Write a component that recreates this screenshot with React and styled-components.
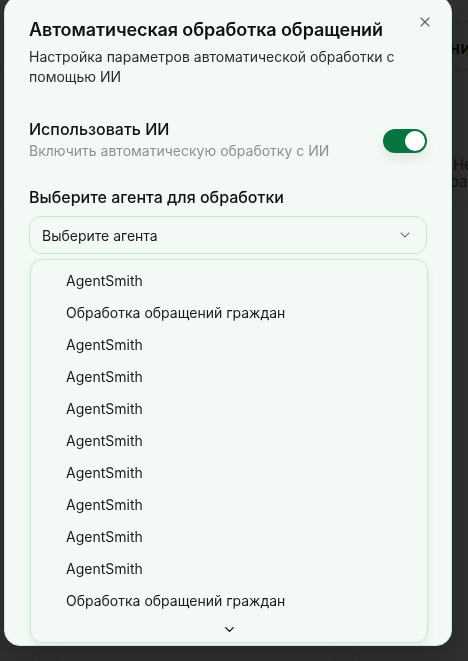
import React from "react";
import styled, { createGlobalStyle } from "styled-components";
import { X, ChevronDown } from "lucide-react";

const Global = createGlobalStyle`
  html, body { margin: 0; padding: 0; }
  body {
    background: #ffffff;
    font-family: Inter, "Noto Sans", "Liberation Sans", sans-serif;
    -webkit-font-smoothing: antialiased;
  }
  * { box-sizing: border-box; }
`;

const Page = styled.div`
  width: 468px;
  height: 661px;
  overflow: hidden;
  background: #ffffff;
  color: #111;
  display: flex;
  flex-direction: column;
`;

const TopBar = styled.div`
  height: 22px;
  border-bottom: 1px solid #e4e4e4;
`;

const Heading = styled.div`
  height: 48px;
  padding-top: 4px;
  border-bottom: 1px solid #e4e4e4;
  display: flex;
  align-items: center;
  justify-content: flex-end;
  font-size: 18px;
  font-weight: 500;
  white-space: nowrap;
  margin-right: -3px;
`;

const Row = styled.div`
  height: ${(p) => p.$h}px;
  border-bottom: 1px dashed #e4e4e4;
  display: flex;
  flex-direction: column;
  align-items: flex-end;
  justify-content: flex-end;
  padding-bottom: 13px;
  white-space: nowrap;
  font-size: 15px;
  color: #555;
  margin-right: -12px;
  line-height: 17px;
`;

const Table = styled.div`
  flex: 1;
  display: grid;
  grid-template-columns: 33px 25px 277px 25px 1fr;
`;

const Cell = styled.div`
  border-right: 1px solid #e4e4e4;
`;

const Overlay = styled.div`
  position: fixed;
  inset: 0;
  background: rgba(0, 0, 0, 0.81);
`;

const Dialog = styled.div`
  position: fixed;
  top: -4px;
  left: 4px;
  width: 448px;
  height: 650px;
  background: #f3faf6;
  border: 1px solid #cfe9d6;
  border-radius: 16px;
  padding: 19px 24px 0 24px;
  display: flex;
  flex-direction: column;
  box-shadow: 0 10px 30px rgba(0, 0, 0, 0.25);
`;

const CloseButton = styled.button`
  position: absolute;
  top: 16px;
  right: 17px;
  width: 18px;
  height: 18px;
  padding: 0;
  border: none;
  background: transparent;
  color: #444;
  display: flex;
  align-items: center;
  justify-content: center;
  opacity: 0.85;
`;

const Title = styled.h2`
  margin: 0;
  font-size: 18px;
  line-height: 28px;
  font-weight: 600;
  color: #111;
  letter-spacing: -0.1px;
`;

const Subtitle = styled.p`
  margin: 3px 0 0;
  font-size: 14px;
  line-height: 20px;
  color: #2b2b2b;
`;

const SwitchRow = styled.div`
  margin-top: 30px;
  display: flex;
  align-items: center;
  justify-content: space-between;
`;

const SwitchText = styled.div`
  display: flex;
  flex-direction: column;
`;

const Label = styled.div`
  font-size: 16px;
  line-height: 24px;
  font-weight: 500;
  color: #111;
`;

const Hint = styled.div`
  font-size: 14px;
  line-height: 20px;
  color: #8a8f99;
`;

const Toggle = styled.div`
  width: 44px;
  height: 24px;
  border-radius: 12px;
  background: #08743f;
  padding: 2px;
  display: flex;
  justify-content: flex-end;
  margin-top: 4px;
  box-shadow: 0 6px 12px rgba(0, 0, 0, 0.08);
`;

const Knob = styled.div`
  width: 20px;
  height: 20px;
  border-radius: 50%;
  background: #ffffff;
`;

const Field = styled.div`
  margin-top: 24px;
  display: flex;
  flex-direction: column;
`;

const Trigger = styled.div`
  margin-top: 7px;
  height: 38px;
  border: 1px solid #c4e8cd;
  border-radius: 12px;
  padding: 0 13px 0 12px;
  display: flex;
  align-items: center;
  justify-content: space-between;
  font-size: 14px;
  color: #1a1a1a;
  background: #f3faf6;
`;

const TriggerIcon = styled.span`
  display: flex;
  color: #7a7a7a;
`;

const List = styled.div`
  margin: 5px -1px 0 1px;
  border: 1px solid #c4e8cd;
  border-radius: 12px;
  background: #f3faf6;
  padding: 4px 0 0;
  box-shadow: 0 3px 8px rgba(0, 60, 20, 0.08);
  display: flex;
  flex-direction: column;
`;

const Item = styled.div`
  height: 32px;
  padding-left: 35px;
  display: flex;
  align-items: center;
  font-size: 14px;
  color: #1a1a1a;
`;

const ScrollDown = styled.div`
  height: 26px;
  display: flex;
  align-items: flex-start;
  justify-content: center;
  padding-top: 6px;
  color: #111;
`;

const items = [
  "AgentSmith",
  "Обработка обращений граждан",
  "AgentSmith",
  "AgentSmith",
  "AgentSmith",
  "AgentSmith",
  "AgentSmith",
  "AgentSmith",
  "AgentSmith",
  "AgentSmith",
  "Обработка обращений граждан",
];

export default function App() {
  return (
    <>
      <Global />
      <Page>
        <TopBar />
        <Heading>ни</Heading>
        <Row $h={134}>
          <span>Нет</span>
          <span>ращ</span>
        </Row>
        <Table>
          <Cell />
          <Cell />
          <Cell />
          <Cell />
          <div />
        </Table>
      </Page>
      <Overlay />
      <Dialog role="dialog">
        <CloseButton aria-label="Закрыть">
          <X size={16} strokeWidth={1.6} />
        </CloseButton>
        <Title>Автоматическая обработка обращений</Title>
        <Subtitle>
          Настройка параметров автоматической обработки с помощью ИИ
        </Subtitle>
        <SwitchRow>
          <SwitchText>
            <Label>Использовать ИИ</Label>
            <Hint>Включить автоматическую обработку с ИИ</Hint>
          </SwitchText>
          <Toggle>
            <Knob />
          </Toggle>
        </SwitchRow>
        <Field>
          <Label>Выберите агента для обработки</Label>
          <Trigger>
            <span>Выберите агента</span>
            <TriggerIcon>
              <ChevronDown size={16} strokeWidth={1.6} />
            </TriggerIcon>
          </Trigger>
          <List>
            {items.map((t, i) => (
              <Item key={i}>{t}</Item>
            ))}
            <ScrollDown>
              <ChevronDown size={15} strokeWidth={2.2} />
            </ScrollDown>
          </List>
        </Field>
      </Dialog>
    </>
  );
}
